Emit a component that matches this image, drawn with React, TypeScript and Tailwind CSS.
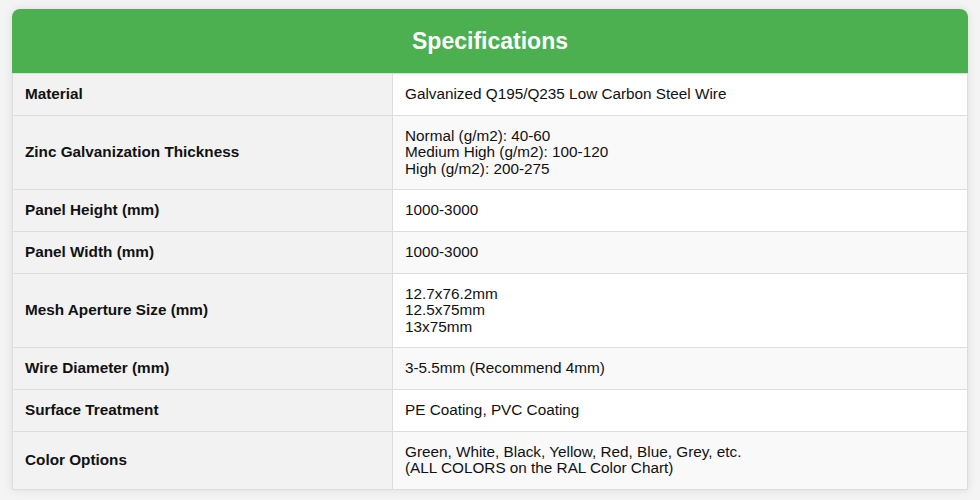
const specs: { label: string; value: string[] }[] = [
  { label: 'Material', value: ['Galvanized Q195/Q235 Low Carbon Steel Wire'] },
  {
    label: 'Zinc Galvanization Thickness',
    value: ['Normal (g/m2): 40-60', 'Medium High (g/m2): 100-120', 'High (g/m2): 200-275'],
  },
  { label: 'Panel Height (mm)', value: ['1000-3000'] },
  { label: 'Panel Width (mm)', value: ['1000-3000'] },
  { label: 'Mesh Aperture Size (mm)', value: ['12.7x76.2mm', '12.5x75mm', '13x75mm'] },
  { label: 'Wire Diameter (mm)', value: ['3-5.5mm (Recommend 4mm)'] },
  { label: 'Surface Treatment', value: ['PE Coating, PVC Coating'] },
  {
    label: 'Color Options',
    value: ['Green, White, Black, Yellow, Red, Blue, Grey, etc.', '(ALL COLORS on the RAL Color Chart)'],
  },
];

export default function App() {
  return (
    <div
      className="w-[980px] h-[500px] bg-[#f4f4f4] pt-[9px] px-3"
      style={{ fontFamily: '"Liberation Sans", Arial, sans-serif' }}
    >
      <div className="bg-white rounded-t-lg overflow-hidden shadow-[0_0_10px_rgba(0,0,0,0.1)]">
        {/* Header */}
        <div className="bg-[#4caf50] h-16 flex items-center justify-center">
          <h2 className="text-white font-bold text-[23px]">Specifications</h2>
        </div>

        {/* Table */}
        <table className="w-full border-collapse text-[15.3px] leading-[16.6px] text-[#111]">
          <tbody>
            {specs.map((row, idx) => (
              <tr key={row.label} className={idx % 2 === 1 ? 'bg-[#f9f9f9]' : 'bg-white'}>
                <td className="w-[380px] bg-[#f2f2f2] border border-[#ddd] px-3 py-3 font-bold align-middle">
                  {row.label}
                </td>
                <td className="border border-[#ddd] px-3 py-3 align-middle">
                  {row.value.map((line) => (
                    <div key={line}>{line}</div>
                  ))}
                </td>
              </tr>
            ))}
          </tbody>
        </table>
      </div>
    </div>
  );
}
